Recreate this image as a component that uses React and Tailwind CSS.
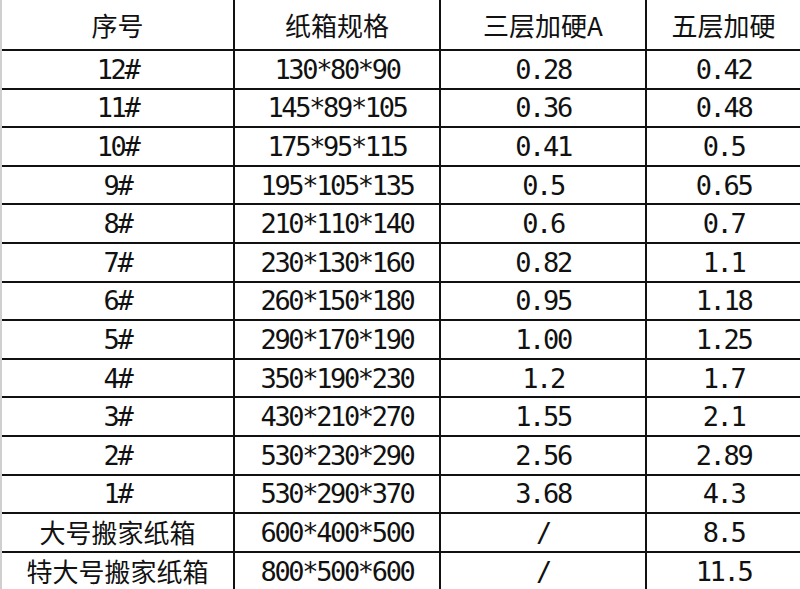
const rows = [
  ["12#", "130*80*90", "0.28", "0.42"],
  ["11#", "145*89*105", "0.36", "0.48"],
  ["10#", "175*95*115", "0.41", "0.5"],
  ["9#", "195*105*135", "0.5", "0.65"],
  ["8#", "210*110*140", "0.6", "0.7"],
  ["7#", "230*130*160", "0.82", "1.1"],
  ["6#", "260*150*180", "0.95", "1.18"],
  ["5#", "290*170*190", "1.00", "1.25"],
  ["4#", "350*190*230", "1.2", "1.7"],
  ["3#", "430*210*270", "1.55", "2.1"],
  ["2#", "530*230*290", "2.56", "2.89"],
  ["1#", "530*290*370", "3.68", "4.3"],
  ["大号搬家纸箱", "600*400*500", "/", "8.5"],
  ["特大号搬家纸箱", "800*500*600", "/", "11.5"],
];

const cols = "grid grid-cols-[233px_206px_206px_153px]";
const cjk = "font-['Noto_Sans_CJK_SC',sans-serif] text-[26px] leading-none";
const mono = "font-['DejaVu_Sans_Mono','Noto_Sans_CJK_SC',monospace] text-[27px] tracking-[-2.35px] leading-none";

const Cell = ({ children, last, cn }) => (
  <div className={`flex items-center justify-center ${last ? "" : "border-r-2 border-[#111]"} ${cn}`}>
    {children}
  </div>
);

const App = () => {
  return (
    <div className="w-[800px] h-[589px] overflow-hidden bg-white text-[#111] border-l-2 border-[#cfcfcf]">
      <div className={`${cols} h-[51px] border-b-2 border-[#111]`}>
        <Cell cn={cjk}>序号</Cell>
        <Cell cn={cjk}>纸箱规格</Cell>
        <Cell cn={cjk}>三层加硬A</Cell>
        <Cell cn={cjk} last>五层加硬</Cell>
      </div>
      {rows.map((r) => (
        <div key={r[0]} className={`${cols} h-[38.6px] border-b-2 border-[#111]`}>
          <Cell cn={/#/.test(r[0]) ? mono : cjk}>{r[0]}</Cell>
          <Cell cn={mono}>{r[1]}</Cell>
          <Cell cn={mono}>{r[2]}</Cell>
          <Cell cn={mono} last>{r[3]}</Cell>
        </div>
      ))}
    </div>
  );
};

export default App;
